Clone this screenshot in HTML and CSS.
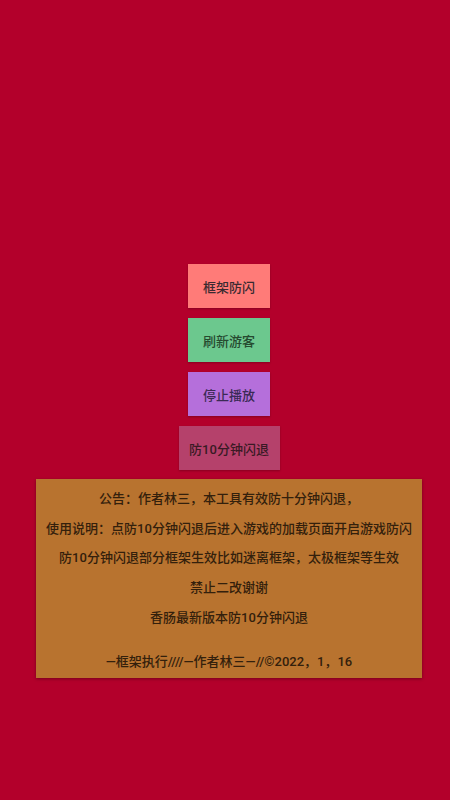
FILE: index.html
```html
<!DOCTYPE html>
<html lang="zh">
<head>
<meta charset="utf-8">
<title>框架防闪</title>
<link rel="stylesheet" href="styles.css">
</head>
<body>
<main class="screen">
  <div class="actions">
    <button class="btn btn-red">框架防闪</button>
    <button class="btn btn-green">刷新游客</button>
    <button class="btn btn-purple">停止播放</button>
    <button class="btn btn-wide btn-pink">防10分钟闪退</button>
  </div>
  <section class="notice">
    <p class="line">公告：作者林三，本工具有效防十分钟闪退，</p>
    <p class="line">使用说明：点防10分钟闪退后进入游戏的加载页面开启游戏防闪</p>
    <p class="line">防10分钟闪退部分框架生效比如迷离框架，太极框架等生效</p>
    <p class="line">禁止二改谢谢</p>
    <p class="line">香肠最新版本防10分钟闪退</p>
    <p class="line sign">—框架执行////—作者林三—//©2022，1，16</p>
  </section>
</main>
</body>
</html>
```
FILE: styles.css
```css
html, body {
  margin: 0;
  padding: 0;
  background: #b3002b;
}
body {
  width: 450px;
  height: 800px;
  overflow: hidden;
  font-family: Roboto, "Noto Sans CJK SC", "Noto Sans", sans-serif;
}
.screen {
  display: flex;
  flex-direction: column;
  align-items: center;
  padding: 264px 0 0 8px;
}
.actions {
  display: flex;
  flex-direction: column;
  align-items: center;
  gap: 10px;
}
.btn {
  width: 82px;
  height: 44px;
  border: none;
  padding: 0;
  margin: 0;
  font-family: inherit;
  font-size: 13px;
  font-weight: 500;
  color: #3a2a30;
  box-shadow: 0 1px 2px rgba(0, 0, 0, 0.25);
}
.btn-wide { width: 101px; }
.btn-red { background: #ff7b78; }
.btn-green { background: #6cc88e; color: #264a30; }
.btn-purple { background: #b56fdb; color: #3a2a55; }
.btn-pink { background: #b5416b; color: #3a1a25; }
.notice {
  margin-top: 9px;
  width: 386px;
  height: 199px;
  box-sizing: border-box;
  padding-top: 5px;
  background: #b8732f;
  box-shadow: 0 1px 3px rgba(0, 0, 0, 0.35);
  text-align: center;
  color: #33200c;
  font-size: 13px;
  font-weight: 500;
}
.line {
  margin: 0;
  line-height: 29.7px;
  white-space: nowrap;
}
.sign { margin-top: 14px; }
```
